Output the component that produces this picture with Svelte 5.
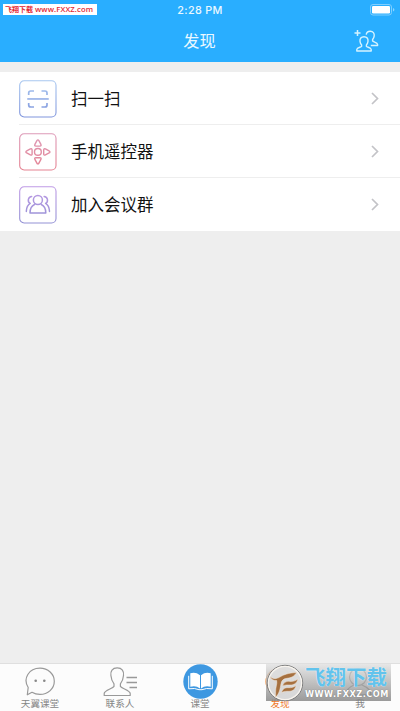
<script>
  let active = $state("discover");

  const rows = [
    { id: "scan", label: "扫一扫", from: "#a9c8f0", to: "#7f94dc" },
    { id: "remote", label: "手机遥控器", from: "#dd9ab8", to: "#e58291" },
    { id: "meeting", label: "加入会议群", from: "#c09be6", to: "#9291d4" },
  ];

  const tabs = [
    { id: "chat", label: "天翼课堂" },
    { id: "contacts", label: "联系人" },
    { id: "class", label: "课堂" },
    { id: "discover", label: "发现" },
    { id: "me", label: "我" },
  ];
</script>

<div class="screen">
  <header class="header">
    <span class="site-tag">飞翔下载 <b>www.FXXZ.com</b></span>
    <div class="status">
      <span class="time">2:28 PM</span>
      <svg class="battery" width="25" height="12" viewBox="0 0 25 12">
        <rect x=".5" y=".5" width="21" height="10.5" rx="2.5" fill="none" stroke="#7fcfff" />
        <rect x="2" y="2" width="18" height="7.5" rx="1.2" fill="#fff" />
        <path d="M23 4v3.5q1.4-.5 1.4-1.75T23 4z" fill="#8fd5ff" />
      </svg>
    </div>
    <div class="nav">
      <h1>发现</h1>
      <button class="add" aria-label="添加">
        <svg width="25" height="24" viewBox="0 0 25 24" fill="none" stroke="#d5f3ff" stroke-width="1.4" stroke-linejoin="round">
          <path d="M3.500 1v6M.5 4h6" stroke-width="1.500" />
          <path d="M10 7.700c-3 0-4.300 2-4 4.600.2 1.700.8 2.600 1.600 3.600v1.400c-.6 1-4.600 1.200-4.800 3.200V22h14.400v-1.500c-.2-2-4.200-2.200-4.800-3.200v-1.400c.8-1 1.400-1.900 1.600-3.600.3-2.600-1-4.600-4-4.600z" />
          <path d="M12.200 5.600c.3-2 1.700-3.300 4-3.300 3 0 4.300 2 4 4.600-.2 1.700-.8 2.600-1.600 3.600v1.400c.6 1.300 4.800 1.400 5 3.600v1h-6.800" />
        </svg>
      </button>
    </div>
  </header>

  <main class="list">
    {#each rows as row}
      <button class="row">
        <svg class="row-icon" width="38" height="38" viewBox="0 0 38 38" fill="none">
          <defs>
            <linearGradient id={`tone-${row.id}`} x1="0" y1="0" x2="0" y2="38" gradientUnits="userSpaceOnUse">
              <stop offset="0" stop-color={row.from} />
              <stop offset="1" stop-color={row.to} />
            </linearGradient>
          </defs>
          <g stroke={`url(#tone-${row.id})`}>
            <rect x=".7" y=".7" width="36.300" height="36.300" rx="4.500" stroke-width="1.100" />
            {#if row.id === "scan"}
              <path d="M9.700 15v-2q0-2 2-2h3.300M22.500 11h3.500q2 0 2 2v2M9.700 23v2q0 2 2 2h3.300M22.500 27h3.500q2 0 2-2v-2" stroke-width="1.700" />
              <path d="M9 18.900h20V19H9z" stroke-width="1.500" />
            {:else if row.id === "remote"}
              <g stroke-width="1.400" stroke-linejoin="round">
                <circle cx="18.900" cy="18.900" r="3.400" />
                <path d="M18.900 6.900q.6 0 1 .8l2 3.700q.7 1.700-1 1.700h-4q-1.700 0-1-1.700l2-3.700q.4-.8 1-.8z" />
                <path d="M18.900 30.900q.6 0 1-.8l2-3.700q.7-1.700-1-1.700h-4q-1.700 0-1 1.700l2 3.700q.4.800 1 .8z" />
                <path d="M6.900 18.900q0-.6.800-1l3.700-2q1.700-.7 1.700 1v4q0 1.700-1.700 1l-3.700-2q-.8-.4-.8-1z" />
                <path d="M30.900 18.900q0-.6-.8-1l-3.700-2q-1.700-.7-1.700 1v4q0 1.700 1.700 1l3.700-2q.8-.4.800-1z" />
              </g>
            {:else}
              <g stroke-width="1.500" stroke-linecap="round" stroke-linejoin="round">
                <circle cx="18.900" cy="14" r="4.500" />
                <path d="M15.500 18.500c-3.100 1.400-4.500 4.300-4.500 8.500h15.800c0-4.200-1.400-7.100-4.500-8.500" />
                <path d="M12.700 10.400c-3.600.2-4.700 5.400-1.500 7-2.400 1.400-3.700 4-3.900 8M25.100 10.400c3.600.2 4.700 5.400 1.500 7 2.400 1.400 3.700 4 3.900 8" />
              </g>
            {/if}
          </g>
        </svg>
        <span class="row-label">{row.label}</span>
        <svg class="chevron" width="8" height="13" viewBox="0 0 8 13" fill="none" stroke="#c3c3c7" stroke-width="1.700">
          <path d="M1 1l5.500 5.500L1 12" />
        </svg>
      </button>
    {/each}
  </main>

  <footer class="tabs">
    {#each tabs as tab}
      <button class="tab" class:active={active === tab.id} onclick={() => (active = tab.id)}>
        <span class="tab-icon">
          {#if tab.id === "chat"}
            <svg width="32" height="30" viewBox="0 0 32 30" fill="none" stroke="#999" stroke-width="1.200" stroke-linejoin="round">
              <path d="M4.200 20.500C-1.500 11.500 5 1.200 16 1.200c8 0 14.300 5.800 14.300 13.100S24 27.400 16 27.400c-3 0-5.700-.7-8-2.100l-4.700 2.500z" />
              <g fill="#888" stroke="none">
                <circle cx="11.700" cy="13.700" r="1.300" />
                <circle cx="20.300" cy="13.700" r="1.300" />
              </g>
            </svg>
          {:else if tab.id === "contacts"}
            <svg width="34" height="30" viewBox="0 0 34 30" fill="none" stroke="#999" stroke-width="1.200" stroke-linejoin="round">
              <path d="M14.200.9C9.300.9 7.300 4.100 7.900 8.500c.3 3.300.8 5.700 3.100 8.400v2.500c-1.200 2.200-9.800 3.800-9.800 7.100v2h26v-2c0-3.300-8.600-4.900-9.800-7.100v-2.500c2.300-2.700 2.800-5.100 3.100-8.400C21.100 4.100 19.100.9 14.200.9z" />
              <path d="M23.500 10.500H34M23.500 15.500H34M26.500 20.500H34" stroke-width="1.700" />
            </svg>
          {:else if tab.id === "class"}
            <svg width="35" height="35" viewBox="0 0 35 35">
              <circle cx="17.500" cy="17.500" r="17.200" fill="#3e98e1" />
              <path d="M17 11.200Q12.500 7.500 7.300 9.300V22.800Q12.800 21 17 24.500zM18 11.200Q22.500 7.500 27.700 9.300V22.800Q22.200 21 18 24.500z" fill="#fff" />
              <path d="M5.700 11.800v13q6.300-1 10.300.9h3q4-1.900 10.300-.9v-13" fill="none" stroke="#fff" stroke-width="1" />
            </svg>
          {:else if tab.id === "discover"}
            <svg width="30" height="30" viewBox="0 0 30 30" fill="none" stroke="#f08a35" stroke-width="1.200">
              <circle cx="14" cy="14.500" r="13" />
              <path d="M20 8l-3.500 9L8 21l3.500-9z" />
            </svg>
          {:else}
            <svg width="30" height="30" viewBox="0 0 30 30" fill="none" stroke="#777" stroke-width="1.200">
              <circle cx="13" cy="10" r="8.500" />
              <path d="M9 18C4 20 1 23 1 28h25c0-5-4-8-9-10" />
            </svg>
          {/if}
        </span>
        <span class="tab-label">{tab.label}</span>
      </button>
    {/each}

    <div class="stamp">
      <svg class="stamp-logo" width="38" height="38" viewBox="0 0 38 38">
        <circle cx="19" cy="19" r="17.700" fill="#dedede" fill-opacity=".9" stroke="#777" stroke-width="1" />
        <circle cx="19" cy="19" r="16.600" fill="none" stroke="#f8f4ee" stroke-width="1.300" />
        <g fill="#a6703f" stroke="#f4e8da" stroke-width=".5">
          <path d="M4 12.500c3.500 3 6.500 2.500 9.700.6C18 10.500 22.500 9 30.500 8.500c-2 4-5.500 5.300-9.500 5.800-3.800.5-5.300 2-6 5.500-1 5-1.300 9.500-5.500 13.700.3-4-.2-7.500.8-11.500.5-2.200.7-3.500.4-5.500-3 .3-5.700-1.200-6.700-4z" />
          <path d="M16.500 22c1.500-4 4-4.800 7.300-4.600 3.200.2 5.700-.5 8.200-2.400-1.300 4.500-4 6-8 6-2.700 0-4.500-.3-7.500 1z" />
          <path d="M15.500 28.500c1.300-4 3.500-5 7-4.800 3 .1 5.300-.4 7.500-2.200-1 4.200-3.500 5.800-7.200 5.800-2.800 0-4.600 0-7.300 1.200z" />
        </g>
      </svg>
      <div class="stamp-text">
        <span class="stamp-name">飞翔下载</span>
        <span class="stamp-url">WWW.FXXZ.COM</span>
      </div>
    </div>
  </footer>
</div>

<style>
  :global(body) {
    margin: 0;
  }
  .screen {
    display: flex;
    flex-direction: column;
    width: 400px;
    height: 711px;
    overflow: hidden;
    background: #eee;
    color: #111;
    font-family: "Liberation Sans", "Noto Sans CJK SC", sans-serif;
  }
  button {
    padding: 0;
    border: 0;
    background: none;
    color: inherit;
    font: inherit;
    cursor: pointer;
  }
  svg {
    display: block;
    flex-shrink: 0;
  }
  .header {
    position: relative;
    flex: 0 0 62px;
    box-sizing: border-box;
    background: #29aeff;
    color: #e9f8ff;
  }
  .site-tag {
    position: absolute;
    top: 4px;
    left: 3px;
    display: flex;
    align-items: center;
    gap: 2px;
    box-sizing: border-box;
    width: 94px;
    height: 11px;
    padding-left: 2px;
    background: #fff;
    color: #e32632;
    font-size: 7px;
    font-weight: 700;
    line-height: 11px;
    white-space: nowrap;
  }
  .site-tag b {
    font-family: "Open Sans", sans-serif;
    font-size: 7.700px;
    font-weight: 600;
    letter-spacing: 0.100px;
  }
  .status {
    display: grid;
    grid-template-columns: 1fr auto 1fr;
    align-items: center;
    height: 20px;
    padding: 0 5px;
  }
  .time {
    grid-column: 2;
    font-family: Inter, sans-serif;
    font-size: 10.800px;
    font-weight: 500;
    letter-spacing: 0.350px;
  }
  .battery {
    justify-self: end;
  }
  .nav {
    display: grid;
    grid-template-columns: 1fr auto 1fr;
    align-items: center;
    height: 42px;
    padding-right: 21px;
    padding-left: 20px;
  }
  h1 {
    grid-column: 2;
    margin: 0;
    font-size: 16.200px;
    font-weight: 400;
    line-height: 24px;
  }
  .add {
    justify-self: end;
  }
  .list {
    margin-top: 10px;
    background: #fff;
  }
  .row {
    display: flex;
    align-items: center;
    position: relative;
    width: 100%;
    height: 53px;
    padding: 0 21px 0 19px;
    text-align: left;
  }
  .row + .row::before {
    position: absolute;
    top: -1px;
    right: 0;
    left: 19px;
    height: 1px;
    background: #eee;
    content: "";
  }
  .row-label {
    flex: 1;
    margin-left: 14px;
    font-size: 16.500px;
    line-height: 24px;
  }
  .tabs {
    position: relative;
    display: grid;
    grid-template-columns: repeat(5, 1fr);
    height: 47px;
    margin-top: auto;
    border-top: 1px solid #dfdfdf;
    background: #fcfcfc;
  }
  .tab {
    display: flex;
    flex-direction: column;
    align-items: center;
    justify-content: flex-start;
    color: #858585;
  }
  .tab-icon {
    display: flex;
    align-items: center;
    justify-content: center;
    height: 35px;
  }
  .tab-label {
    height: 10px;
    font-size: 9.600px;
    line-height: 10px;
  }
  .tab.active {
    color: #f07a2a;
  }
  .stamp {
    position: absolute;
    top: 0;
    left: 266px;
    display: flex;
    align-items: center;
    width: 125px;
    height: 37px;
    background: linear-gradient(rgba(225, 225, 225, 0.8), rgba(130, 130, 130, 0.8));
  }
  .stamp-text {
    display: flex;
    flex-direction: column;
    margin-left: 1px;
    white-space: nowrap;
  }
  .stamp-name {
    color: #62c3ec;
    font-size: 20.500px;
    font-weight: 700;
    line-height: 24px;
    text-shadow: 0 0 1px #fff;
  }
  .stamp-url {
    color: #fff;
    font-family: "DejaVu Sans", sans-serif;
    font-size: 8.200px;
    font-weight: 700;
    letter-spacing: 0.500px;
    line-height: 9px;
    text-shadow: 0 0 1px #666;
  }
</style>
